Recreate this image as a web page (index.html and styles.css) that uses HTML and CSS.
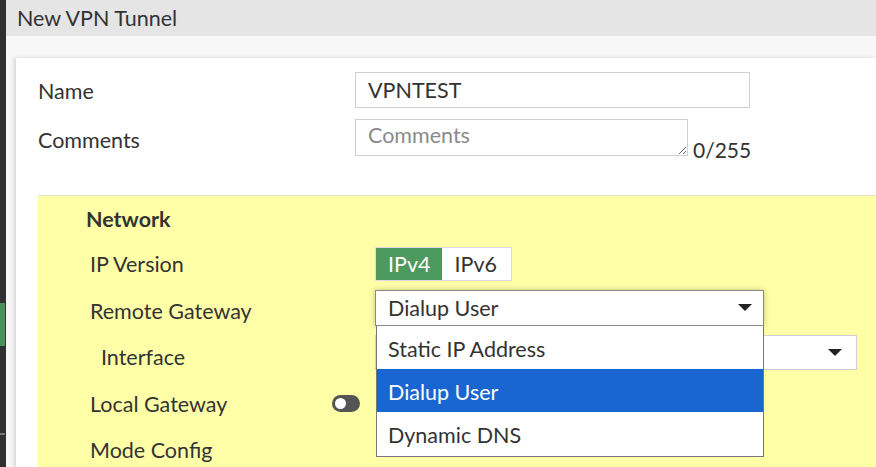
FILE: index.html
```html
<!DOCTYPE html>
<html>
    <head>
        <title>New VPN Tunnel</title>
        <link rel="stylesheet" href="styles.css">
    </head>
    <body>
        <div class="sidebar">
            <div class="side-mark"></div>
            <div class="side-line"></div>
        </div>
        <div class="main">
            <div class="title-bar">New VPN Tunnel</div>
            <div class="content">
                <div class="panel">
                    <div class="form-row">
                        <div class="label">Name</div>
                        <input class="text-input" type="text" value="VPNTEST">
                    </div>
                    <div class="form-row comments-row">
                        <div class="label">Comments</div>
                        <div class="textarea-wrap">
                            <textarea class="comments" placeholder="Comments"></textarea>
                            <span class="counter">0/255</span>
                        </div>
                    </div>

                    <div class="network">
                        <h3>Network</h3>
                        <div class="net-row">
                            <div class="net-label">IP Version</div>
                            <div class="ip-toggle">
                                <span class="ip-opt active">IPv4</span>
                                <span class="ip-opt">IPv6</span>
                            </div>
                        </div>
                        <div class="net-row">
                            <div class="net-label">Remote Gateway</div>
                            <div class="select-wrap">
                                <div class="select open">
                                    <span>Dialup User</span>
                                    <span class="caret"></span>
                                </div>
                                <ul class="options">
                                    <li>Static IP Address</li>
                                    <li class="selected">Dialup User</li>
                                    <li>Dynamic DNS</li>
                                </ul>
                            </div>
                        </div>
                        <div class="net-row">
                            <div class="net-label sub">Interface</div>
                            <div class="select wide">
                                <span></span>
                                <span class="caret"></span>
                            </div>
                        </div>
                        <div class="net-row">
                            <div class="net-label with-switch">
                                Local Gateway
                                <span class="switch"></span>
                            </div>
                        </div>
                        <div class="net-row">
                            <div class="net-label">Mode Config</div>
                        </div>
                    </div>
                </div>
            </div>
        </div>
    </body>
</html>
```

FILE: styles.css
```css
html, body
{
    margin: 0;
    height: 100%;
    overflow: hidden;
}
body
{
    display: flex;
    font-family: Lato, "Open Sans", sans-serif;
    font-size: 21.5px;
    color: #333;
    background: #f7f7f7;
}
.sidebar
{
    width: 6px;
    flex-shrink: 0;
    background: #303030;
    padding-top: 303px;
    box-sizing: border-box;
}
.side-mark
{
    width: 5px;
    height: 43px;
    background: #4b8f5a;
}
.side-line
{
    width: 5px;
    height: 2px;
    margin-top: 87px;
    background: #777;
}
.main
{
    flex: 1;
    display: flex;
    flex-direction: column;
    min-width: 0;
}
.title-bar
{
    height: 36px;
    background: #e5e5e5;
    padding-left: 11px;
    line-height: 36px;
}
.content
{
    flex: 1;
    padding: 22px 0 0 10px;
    min-height: 0;
}
.panel
{
    height: 100%;
    background: #fff;
    box-shadow: -2px 0 4px rgba(0, 0, 0, 0.15);
    padding: 14px 0 0 22px;
    box-sizing: border-box;
    overflow: hidden;
}
.form-row
{
    display: flex;
    align-items: center;
    height: 36px;
}
.comments-row
{
    margin-top: 11px;
    align-items: flex-start;
}
.label
{
    width: 317px;
    line-height: 38px;
    padding-top: 2px;
}
.text-input
{
    width: 395px;
    height: 36px;
    box-sizing: border-box;
    border: 1px solid #d0d0d0;
    padding: 0 12px;
    font-family: Lato, sans-serif;
    font-size: 21.5px;
    color: #333;
}
.textarea-wrap
{
    display: flex;
    align-items: flex-end;
}
.comments
{
    width: 333px;
    height: 37px;
    box-sizing: border-box;
    border: 1px solid #d0d0d0;
    padding: 2px 12px;
    font-family: Lato, sans-serif;
    font-size: 21.5px;
    resize: both;
    overflow: hidden;
}
.comments::placeholder
{
    color: #8a8a8a;
}
.counter
{
    margin-left: 5px;
    margin-bottom: -6px;
    font-size: 21px;
}
.network
{
    margin-top: 40px;
    background: #ffffa8;
    border-top: 1px solid #e2e2c0;
    padding: 1px 0 0 48px;
    height: 300px;
}
.network h3
{
    margin: 0;
    font-size: 21.5px;
    font-weight: bold;
    line-height: 44px;
}
.net-row
{
    display: flex;
    align-items: center;
    height: 46.5px;
    padding-left: 4px;
}
.net-label
{
    width: 285px;
    flex-shrink: 0;
}
.net-label.sub
{
    padding-left: 11px;
    box-sizing: border-box;
}
.with-switch
{
    display: flex;
    align-items: center;
    justify-content: space-between;
    padding-right: 15px;
    box-sizing: border-box;
}
.switch
{
    position: relative;
    width: 28px;
    height: 17px;
    border-radius: 9px;
    background: #555;
}
.switch::after
{
    content: "";
    position: absolute;
    left: 1px;
    top: 1px;
    width: 11px;
    height: 11px;
    border-radius: 50%;
    background: #fff;
    border: 2px solid #555;
}
.ip-toggle
{
    display: flex;
    border: 1px solid #ddd;
    height: 34px;
    box-sizing: border-box;
}
.ip-opt
{
    padding: 0 14px 0 13px;
    line-height: 32px;
    background: #fff;
}
.ip-opt.active
{
    background: #4c9a5e;
    color: #fff;
    padding: 0 11px 0 12px;
}
.select-wrap
{
    position: relative;
    margin-bottom: 6px;
}
.select
{
    display: flex;
    align-items: center;
    justify-content: space-between;
    width: 389px;
    height: 36px;
    box-sizing: border-box;
    border: 1px solid #d0d0d0;
    background: #fff;
    padding: 0 11px 0 12px;
}
.select.open
{
    border-color: #888;
    box-shadow: 0 0 6px rgba(0, 0, 0, 0.25);
}
.select.wide
{
    width: 482px;
    height: 35px;
    margin-bottom: 10px;
    padding-right: 14px;
}
.caret
{
    width: 0;
    height: 0;
    border-left: 7px solid transparent;
    border-right: 7px solid transparent;
    border-top: 7px solid #222;
}
.options
{
    position: absolute;
    top: 100%;
    left: 1px;
    width: 388px;
    margin: 0;
    padding: 0;
    list-style: none;
    background: #fff;
    border: 1px solid #777;
    border-top: none;
    box-sizing: border-box;
    z-index: 2;
}
.options li
{
    height: 39px;
    line-height: 39px;
    padding: 4px 0 0 11px;
}
.options li.selected
{
    background: #1a66d1;
    color: #fff;
}
.options li:last-child
{
    height: 40px;
}
```
